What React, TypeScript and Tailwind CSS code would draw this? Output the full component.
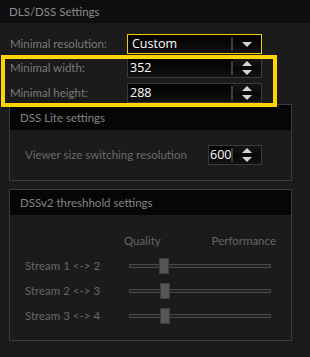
import React from "react";

const font = { fontFamily: "Lato, 'Open Sans', sans-serif" };

function Triangle({ up }: { up?: boolean }) {
  return (
    <svg width="10" height="5" viewBox="0 0 10 5" className="block">
      {up ? <polygon points="0,5 10,5 5,0" fill="#d4d4d4" /> : <polygon points="0,0 10,0 5,5" fill="#d4d4d4" />}
    </svg>
  );
}

function Spin() {
  return (
    <div className="w-[28px] h-full flex flex-col">
      <div className="flex-1 flex items-center justify-center bg-gradient-to-b from-[#161616] to-[#0a0a0a]">
        <Triangle up />
      </div>
      <div className="flex-1 flex items-center justify-center bg-gradient-to-b from-[#080808] to-[#121212]">
        <Triangle />
      </div>
    </div>
  );
}

function Field({
  value,
  width,
  dropdown,
  yellow,
  pl,
}: {
  value: string;
  width: string;
  dropdown?: boolean;
  yellow?: boolean;
  pl: string;
}) {
  return (
    <div
      className={`${width} h-[20px] flex items-center border ${
        yellow ? "border-[#f2cc00]" : "border-[#3a3a3a]"
      } bg-gradient-to-b from-[#020202] to-[#131313]`}
    >
      <div
        className={`flex-1 ${pl} text-[12.5px] leading-none text-white`}
        style={{ fontFamily: "'Open Sans', sans-serif" }}
      >
        {value}
      </div>
      <div className="w-[2px] h-[14px] bg-[#3e3e3e]" />
      {dropdown ? (
        <div className="w-[28px] h-full flex items-center justify-center">
          <Triangle />
        </div>
      ) : (
        <Spin />
      )}
    </div>
  );
}

function Row({ label, children, mt }: { label: string; children: React.ReactNode; mt: string }) {
  return (
    <div className={`flex items-center h-[20px] ${mt}`}>
      <div className="w-[117px] text-[11.5px] text-[#7a7a7a]">{label}</div>
      {children}
    </div>
  );
}

function Group({ title, h, mt, children }: { title: string; h: string; mt: string; children: React.ReactNode }) {
  return (
    <div className={`ml-[9px] w-[283px] ${h} ${mt} border border-[#3c3c3c] flex flex-col`}>
      <div className="h-[25px] bg-[#060606] pl-[10px] flex items-center text-[11.5px] text-[#858585] shrink-0">
        {title}
      </div>
      {children}
    </div>
  );
}

function Slider({ pos }: { pos: number }) {
  return (
    <div className="relative w-[142px] h-[4px] border border-[#484848] bg-[#222222]">
      <div
        className="absolute top-[-7px] w-[10px] h-[16px] bg-[#555555] border border-[#3c3c3c]"
        style={{ left: pos - 1 }}
      />
    </div>
  );
}

export default function App() {
  return (
    <div className="relative w-[310px] h-[357px] bg-[#1b1b1b] overflow-hidden" style={font}>
      <div className="h-[23px] bg-[#0e0e0e] pl-[9px] flex items-center text-[11.5px] text-[#8c8c8c]">
        DLS/DSS Settings
      </div>
      <div className="pl-[10px] pt-[11px]">
        <Row label="Minimal resolution:" mt="">
          <Field value="Custom" width="w-[135px]" dropdown yellow pl="pl-[4px]" />
        </Row>
        <Row label="Minimal width:" mt="mt-[4px]">
          <Field value="352" width="w-[135px]" pl="pl-[2px]" />
        </Row>
        <Row label="Minimal height:" mt="mt-[5px]">
          <Field value="288" width="w-[135px]" pl="pl-[2px]" />
        </Row>
      </div>
      <Group title="DSS Lite settings" h="h-[77px]" mt="mt-[1px]">
        <div className="flex items-center justify-between pl-[15px] pr-[29px] pt-[15px]">
          <div className="text-[11.5px] text-[#6a6a6a]">Viewer size switching resolution</div>
          <Field value="600" width="w-[54px]" pl="pl-[1px]" />
        </div>
      </Group>
      <Group title="DSSv2 threshhold settings" h="h-[152px]" mt="mt-[8px]">
        <div className="pt-[13px]">
          <div className="ml-[114px] w-[152px] h-[25px] flex items-center justify-between text-[11.5px] text-[#656565]">
            <span>Quality</span>
            <span>Performance</span>
          </div>
          {[
            ["Stream 1 <-> 2", 30],
            ["Stream 2 <-> 3", 31],
            ["Stream 3 <-> 4", 31],
          ].map(([l, p]) => (
            <div key={l as string} className="h-[25px] flex items-center pl-[15px]">
              <div className="w-[104px] text-[11.5px] text-[#656565]">{l}</div>
              <Slider pos={p as number} />
            </div>
          ))}
        </div>
      </Group>
      <div className="absolute left-[1px] top-[55px] w-[276px] h-[52px] border-4 border-[#ffd400]" />
    </div>
  );
}
